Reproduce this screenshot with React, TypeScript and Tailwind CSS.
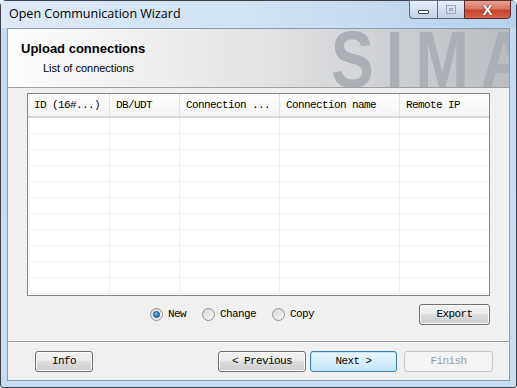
import React from 'react'

const mono = { fontFamily: '"Liberation Mono", "DejaVu Sans Mono", monospace' }

const cols = [
  { label: 'ID (16#...)', w: 'w-[82px]' },
  { label: 'DB/UDT', w: 'w-[70px]' },
  { label: 'Connection ...', w: 'w-[100px]' },
  { label: 'Connection name', w: 'w-[120px]' },
  { label: 'Remote IP', w: 'flex-1' },
]

function Radio({ checked, label }: { checked?: boolean; label: string }) {
  return (
    <div className="flex items-center gap-[5px]">
      <span className="w-[13px] h-[13px] rounded-full border border-[#8f9296] bg-gradient-to-br from-[#d4d5d7] to-[#f7f7f7] flex items-center justify-center">
        {checked && (
          <span className="w-[7px] h-[7px] rounded-full border border-[#1d4f82] bg-[radial-gradient(circle_at_40%_35%,#8fd0f5,#1f78c0_60%,#164a80)]" />
        )}
      </span>
      <span className="text-[11px] tracking-[-0.6px] text-black" style={mono}>{label}</span>
    </div>
  )
}

function Btn({ children, kind = 'normal', w }: { children: React.ReactNode; kind?: 'normal' | 'focus' | 'disabled'; w: string }) {
  const base = 'h-[21px] rounded-[3px] flex items-center justify-center text-[11px] tracking-[-0.6px] ' + w
  if (kind === 'disabled')
    return <div className={base + ' border border-[#c5c7c9] bg-[#f4f4f4] text-[#a0a0a0]'} style={mono}>{children}</div>
  if (kind === 'focus')
    return (
      <div className={base + ' border border-[#3c7fb1] bg-gradient-to-b from-[#eaf6fd] via-[#d9f0fc] to-[#bee6fd] shadow-[inset_0_0_0_1px_#c4e5f6] text-black'} style={mono}>
        {children}
      </div>
    )
  return (
    <div className={base + ' border border-[#707070] bg-[linear-gradient(#f2f2f2,#ebebeb_50%,#dddddd_50%,#cfcfcf)] shadow-[inset_0_0_0_1px_#fcfcfc] text-black'} style={mono}>
      {children}
    </div>
  )
}

export default function App() {
  return (
    <div className="w-[517px] h-[388px] overflow-hidden bg-white">
      <div className="w-[517px] h-[388px] relative rounded-t-[6px] rounded-b-[3px] border border-[#3b3f45] bg-gradient-to-b from-[#c5dbf1] to-[#c9ddf2] flex flex-col">
        {/* Title bar */}
        <div className="h-[27px] flex items-center pl-[8px] bg-gradient-to-r from-[#dde9f6] via-[#d0e2f4] to-[#b6d2ee]">
          <span className="text-[12.5px] text-black" style={{ fontFamily: '"Open Sans", "Noto Sans", sans-serif' }}>
            Open Communication Wizard
          </span>
        </div>
        <div className="absolute top-[-1px] right-[5px] flex h-[19px]">
          <div className="w-[28px] border border-[#5b6a80] border-r-0 rounded-bl-[4px] bg-gradient-to-b from-[#e9f0f8] via-[#d5e1ee] to-[#c1d3e6] flex items-center justify-center">
            <span className="w-[11px] h-[4px] mt-[4px] bg-white border border-[#39404a] rounded-[1px]" />
          </div>
          <div className="w-[27px] border border-[#5b6a80] border-r-0 bg-gradient-to-b from-[#e9f0f8] via-[#d5e1ee] to-[#c1d3e6] flex items-center justify-center">
            <span className="w-[10px] h-[9px] border border-[#9aa6b4] flex items-center justify-center">
              <span className="w-[4px] h-[3px] border border-[#9aa6b4]" />
            </span>
          </div>
          <div className="w-[47px] border border-[#5a2a25] rounded-br-[4px] bg-[linear-gradient(#e8a493,#d87662_45%,#c7432e_55%,#d3624a)] flex items-center justify-center">
            <span className="text-white font-bold text-[15px] leading-none [text-shadow:0_0_1px_#3a1a15,0_0_1px_#3a1a15]" style={{ fontFamily: '"Liberation Sans", sans-serif' }}>X</span>
          </div>
        </div>

        {/* Client area */}
        <div className="mx-[6px] h-[353px] border border-[#8d9bad] bg-[#f0f0f0] flex flex-col">
          {/* Header banner */}
          <div className="h-[59px] relative overflow-hidden border-b border-[#a0a0a0] bg-gradient-to-r from-[#fdfdfd] via-[#e4e4e5] to-[#b9bdc2]">
            <div
              className="absolute left-[323px] top-[-10px] text-[64px] font-bold leading-none tracking-[12px] text-[#abafb6] origin-top scale-y-[1.25] whitespace-nowrap"
              style={{ fontFamily: '"Liberation Sans", Arial, sans-serif' }}
            >
              SIMATIC
            </div>
            <div className="relative pl-[13px] pt-[12px]" style={{ fontFamily: '"Liberation Sans", Arial, sans-serif' }}>
              <div className="text-[13px] font-bold text-black leading-[16px]">Upload connections</div>
              <div className="text-[11px] text-black pl-[22px] mt-[4px] leading-[14px]">List of connections</div>
            </div>
          </div>

          {/* Table */}
          <div className="ml-[19px] mt-[5px] w-[463px] h-[203px] border border-[#828790] bg-white overflow-hidden">
            <div className="flex h-[24px] bg-gradient-to-b from-[#ffffff] to-[#f3f4f6] border-b-2 border-[#d5d5d5]">
              {cols.map((c, i) => (
                <div
                  key={i}
                  className={`${c.w} h-full flex items-center pl-[6px] text-[11px] tracking-[-0.6px] text-black whitespace-nowrap ${i < 4 ? 'border-r border-[#e2e3e5]' : ''}`}
                  style={mono}
                >
                  {c.label}
                </div>
              ))}
            </div>
            {Array.from({ length: 11 }).map((_, r) => (
              <div key={r} className="flex h-[16px] border-b border-[#f0f0f0]">
                {cols.map((c, i) => (
                  <div key={i} className={`${c.w} h-full ${i < 4 ? 'border-r border-[#f0f0f0]' : ''}`} />
                ))}
              </div>
            ))}
          </div>

          {/* Radios + Export */}
          <div className="mt-[8px] h-[21px] flex items-center ml-[142px] mr-[19px]">
            <div className="flex items-center gap-[16px]">
              <Radio checked label="New" />
              <Radio label="Change" />
              <Radio label="Copy" />
            </div>
            <div className="ml-auto">
              <Btn w="w-[71px]">Export</Btn>
            </div>
          </div>

          {/* Separator */}
          <div className="mt-[16px] border-t border-[#a0a0a0] border-b border-b-white" />

          {/* Wizard buttons */}
          <div className="mt-[8px] flex items-center pl-[27px]">
            <Btn w="w-[58px]">Info</Btn>
            <div className="ml-[125px]">
              <Btn w="w-[88px]">&lt; Previous</Btn>
            </div>
            <div className="ml-[4px]">
              <Btn kind="focus" w="w-[87px]">Next &gt;</Btn>
            </div>
            <div className="ml-[7px]">
              <Btn kind="disabled" w="w-[89px]">Finish</Btn>
            </div>
          </div>
        </div>
      </div>
    </div>
  )
}
